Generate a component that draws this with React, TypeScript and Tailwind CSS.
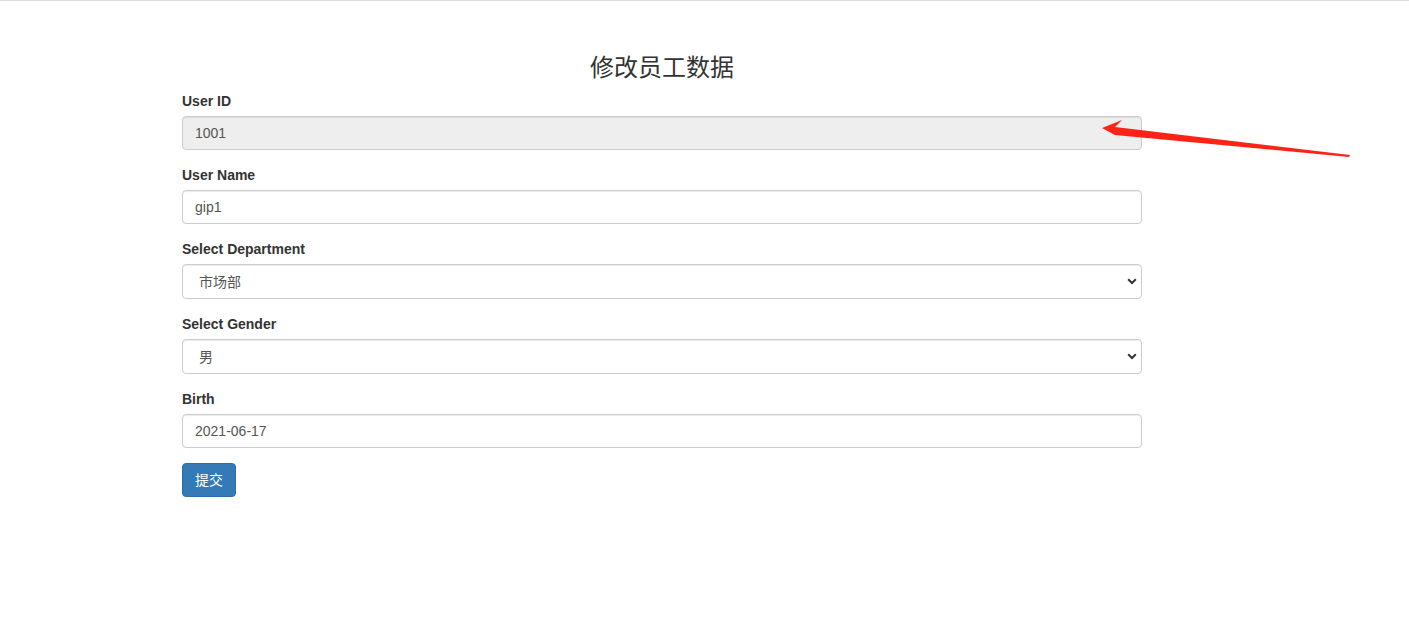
const font = { fontFamily: '"Liberation Sans", Arial, "Noto Sans CJK SC", sans-serif' };

function Field({ label, children, gap = "mb-[15px]" }: { label: string; children: React.ReactNode; gap?: string }) {
  return (
    <div className={gap}>
      <label className="block mb-[5px] text-[14px] leading-[20px] font-bold text-[#333]">{label}</label>
      {children}
    </div>
  );
}

const inputCls =
  "block w-full h-[34px] px-3 py-[6px] text-[14px] leading-[20px] text-[#555] bg-white border border-[#ccc] rounded-[4px] shadow-[inset_0_1px_1px_rgba(0,0,0,0.075)] outline-none";

function Select({ value, options }: { value: string; options: string[] }) {
  return (
    <div className="relative h-[35px]">
      <select className={inputCls + " appearance-none pl-4 pr-8 h-[35px]"} defaultValue={value}>
        {options.map((o) => (
          <option key={o}>{o}</option>
        ))}
      </select>
      <svg className="absolute right-[5px] top-[14px] pointer-events-none" width="10" height="7" viewBox="0 0 10 7">
        <path d="M1.2 1.3 L5 5 L8.8 1.3" fill="none" stroke="#333" strokeWidth="2" />
      </svg>
    </div>
  );
}

export default function App() {
  return (
    <div className="relative min-h-[619px] bg-white border-t border-[#ddd] text-[#333]" style={font}>
      <div className="w-[960px] ml-[182px] pt-[54px]">
        <h3 className="text-center text-[24px] leading-[1.1] font-normal text-[#333] mb-[10px]">修改员工数据</h3>
        <form>
          <Field label="User ID">
            <input className={inputCls} defaultValue="1001" disabled style={{ backgroundColor: "#eee", color: "#555" }} />
          </Field>
          <Field label="User Name">
            <input className={inputCls} defaultValue="gip1" />
          </Field>
          <Field label="Select Department">
            <Select value="市场部" options={["市场部", "技术部"]} />
          </Field>
          <Field label="Select Gender">
            <Select value="男" options={["男", "女"]} />
          </Field>
          <Field label="Birth">
            <input className={inputCls} defaultValue="2021-06-17" />
          </Field>
          <button
            type="button"
            className="h-[34px] px-3 text-[14px] leading-[20px] text-white bg-[#337ab7] border border-[#2e6da4] rounded-[4px]"
          >
            提交
          </button>
        </form>
      </div>
      <svg className="absolute left-[1095px] top-[117px]" width="260" height="42" viewBox="0 0 260 42">
        <polygon points="7,10 27,2 20,9 255,37 254,39 20,17 29,22" fill="#ff2216" />
      </svg>
    </div>
  );
}
